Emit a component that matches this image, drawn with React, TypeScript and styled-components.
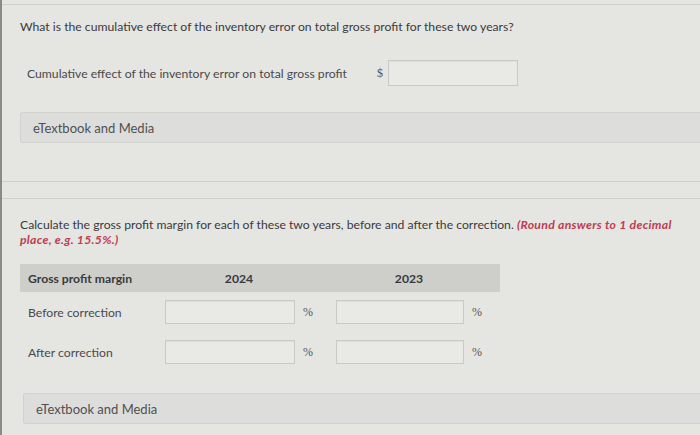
import React from "react";
import styled, { createGlobalStyle } from "styled-components";

const Global = createGlobalStyle`
  html, body { margin: 0; padding: 0; background: #e5e5e2; }
  body { font-family: Lato, "Liberation Sans", sans-serif; }
`;

const Page = styled.div`
  width: 700px;
  height: 435px;
  box-sizing: border-box;
  overflow: hidden;
  background: #e5e5e2;
  border-left: 2px solid #8a8a88;
  padding-left: 18px;
  padding-top: 4px;
`;

const Section = styled.section<{ $top?: boolean; $bottom?: boolean }>`
  border-top: ${(p) => (p.$top ? "1px solid #cfcfcc" : "none")};
  border-bottom: ${(p) => (p.$bottom ? "1px solid #cfcfcc" : "none")};
  margin-left: -18px;
  padding-left: 18px;
`;

const Question = styled.p<{ $mt: number }>`
  margin: ${(p) => p.$mt}px 0 0 0;
  font-size: 12.2px;
  line-height: 15px;
  color: #3a3a3a;
`;

const Em = styled.span`
  color: #c23a50;
  font-weight: 700;
  font-style: italic;
  letter-spacing: 0.3px;
`;

const AnswerRow = styled.div`
  display: flex;
  align-items: center;
  margin-top: 26px;
  padding-left: 7px;
  height: 26px;
`;

const Label = styled.span`
  font-size: 12.2px;
  color: #4a4a4a;
`;

const Unit = styled.span<{ $left?: number }>`
  font-family: "Liberation Serif", serif;
  font-size: 12px;
  color: #555;
  margin-left: ${(p) => p.$left ?? 8}px;
`;

const Box = styled.div<{ $w: number; $h: number; $ml?: number }>`
  width: ${(p) => p.$w}px;
  height: ${(p) => p.$h}px;
  margin-left: ${(p) => p.$ml ?? 0}px;
  box-sizing: border-box;
  border: 1px solid #c9c9c6;
  background: #e9e9e6;
  box-shadow: inset 0 1px 1px rgba(0, 0, 0, 0.04);
`;

const Panel = styled.div<{ $mt: number; $ml?: number }>`
  margin-top: ${(p) => p.$mt}px;
  margin-left: ${(p) => p.$ml ?? 0}px;
  height: 31px;
  box-sizing: border-box;
  background: #dddddb;
  border: 1px solid #d2d2cf;
  border-right: none;
  border-radius: 3px 0 0 3px;
  display: flex;
  align-items: center;
  padding-left: 12px;
  font-size: 13px;
  color: #505050;
`;

const Spacer = styled.div<{ $h: number }>`
  height: ${(p) => p.$h}px;
`;

const Table = styled.div`
  width: 480px;
  margin-top: 17px;
  display: grid;
  grid-template-columns: 140px 158px 182px;
`;

const Head = styled.div<{ $center?: boolean }>`
  background: #cececb;
  height: 28px;
  display: flex;
  align-items: center;
  justify-content: ${(p) => (p.$center ? "center" : "flex-start")};
  padding-left: ${(p) => (p.$center ? 0 : 8)}px;
  font-size: 12.2px;
  font-weight: 700;
  color: #3a3a3a;
  margin-bottom: 8px;
`;

const RowLabel = styled.div`
  height: 40px;
  display: flex;
  align-items: flex-start;
  padding-left: 8px;
  box-sizing: border-box;
`;

const LabelLine = styled.div`
  height: 24px;
  display: flex;
  align-items: center;
  font-size: 12.2px;
  color: #4a4a4a;
`;

const Cell = styled.div`
  height: 40px;
  display: flex;
  align-items: flex-start;
  justify-content: center;
`;

const CellInner = styled.div`
  display: flex;
  align-items: center;
  height: 24px;
`;

export default function App() {
  const rows = ["Before correction", "After correction"];
  return (
    <>
      <Global />
      <Page>
        <Section $top $bottom>
          <Question $mt={14}>
            What is the cumulative effect of the inventory error on total gross profit for these two years?
          </Question>
          <AnswerRow>
            <Label>Cumulative effect of the inventory error on total gross profit</Label>
            <Unit $left={30}>$</Unit>
            <Box $w={130} $h={26} $ml={5} />
          </AnswerRow>
          <Panel $mt={26}>eTextbook and Media</Panel>
          <Spacer $h={38} />
        </Section>
        <Spacer $h={16} />
        <Section $top>
          <Question $mt={18}>
            Calculate the gross profit margin for each of these two years, before and after the correction.{" "}
            <Em>(Round answers to 1 decimal place, e.g. 15.5%.)</Em>
          </Question>
          <Table>
            <Head>Gross profit margin</Head>
            <Head $center>2024</Head>
            <Head $center>2023</Head>
            {rows.map((r) => (
              <React.Fragment key={r}>
                <RowLabel>
                  <LabelLine>{r}</LabelLine>
                </RowLabel>
                <Cell>
                  <CellInner>
                    <Box $w={130} $h={24} />
                    <Unit>%</Unit>
                  </CellInner>
                </Cell>
                <Cell>
                  <CellInner>
                    <Box $w={128} $h={24} />
                    <Unit>%</Unit>
                  </CellInner>
                </Cell>
              </React.Fragment>
            ))}
          </Table>
          <Panel $mt={13} $ml={3}>eTextbook and Media</Panel>
        </Section>
      </Page>
    </>
  );
}
